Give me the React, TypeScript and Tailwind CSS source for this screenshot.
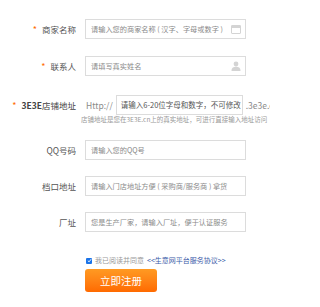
import React from "react";

const Star = () => <span className="mr-[5px] text-[9px] leading-none text-[#ff6a00]">*</span>;

const StoreIcon = () => (
  <svg width="10" height="9" viewBox="0 0 10 9" className="shrink-0">
    <rect x="0.5" y="0.5" width="9" height="8" rx="0.5" fill="none" stroke="#d4d4d4" />
    <rect x="0.5" y="0.5" width="9" height="2.5" fill="#d4d4d4" />
  </svg>
);

const UserIcon = () => (
  <svg width="10" height="10" viewBox="0 0 10 10" className="shrink-0">
    <circle cx="5" cy="3" r="2.4" fill="#d4d4d4" />
    <path d="M0.5 10 C0.5 6.6 2.5 5.8 5 5.8 C7.5 5.8 9.5 6.6 9.5 10 Z" fill="#d4d4d4" />
  </svg>
);

type Row = {
  label: string;
  placeholder: string;
  required?: boolean;
  icon?: React.ReactNode;
  mt: string;
};

const rows: Row[] = [
  { label: "商家名称", placeholder: "请输入您的商家名称 ( 汉字、字母或数字 )", required: true, icon: <StoreIcon />, mt: "mt-0" },
  { label: "联系人", placeholder: "请填写真实姓名", required: true, icon: <UserIcon />, mt: "mt-[17px]" },
];

const rows2: Row[] = [
  { label: "QQ号码", placeholder: "请输入您的QQ号", mt: "mt-[16px]" },
  { label: "档口地址", placeholder: "请输入门店地址方便 ( 采购商/服务商 ) 拿货", mt: "mt-[16px]" },
  { label: "厂址", placeholder: "您是生产厂家，请输入厂址，便于认证服务", mt: "mt-[16px]" },
];

const FieldRow = ({ row }: { row: Row }) => (
  <div className={`flex h-[20px] items-center ${row.mt}`}>
    <div className="flex w-[76px] items-center justify-end text-[8.5px] text-[#555]">
      {row.required && <Star />}
      <span>{row.label}</span>
    </div>
    <div className="ml-[9px] flex h-[20px] w-[161px] items-center border border-[#dcdcdc] bg-white pl-[5px] pr-[4px]">
      <span className="flex-1 overflow-hidden whitespace-nowrap text-[7.2px] text-[#8a8a8a]">{row.placeholder}</span>
      {row.icon}
    </div>
  </div>
);

export default function App() {
  return (
    <div className="h-[307px] w-[270px] overflow-hidden bg-white pt-[19px] font-['Noto_Sans_CJK_SC',sans-serif]">
      {rows.map((r) => (
        <FieldRow key={r.label} row={r} />
      ))}

      {/* shop url */}
      <div className="mt-[19px] flex h-[20px] w-[270px] items-center overflow-hidden whitespace-nowrap">
        <div className="flex w-[76px] shrink-0 items-center justify-end text-[8.5px] text-[#444]">
          <Star />
          <span className="font-semibold">3E3E</span>
          <span>店铺地址</span>
        </div>
        <span className="ml-[10px] text-[8.5px] text-[#8a8a8a]">Http://</span>
        <div className="ml-[3px] flex h-[20px] w-[127px] shrink-0 items-center overflow-hidden border border-[#dcdcdc] pl-[4px]">
          <span className="text-[7.5px] text-[#555]">请输入6-20位字母和数字，不可修改</span>
        </div>
        <span className="ml-[3px] text-[8.5px] text-[#8a8a8a]">.3e3e.cn/</span>
      </div>
      <div className="ml-[81px] overflow-hidden whitespace-nowrap text-[6.5px] leading-[9px] text-[#999]">
        店铺地址是您在3E3E.cn上的真实地址，可进行直接输入地址访问
      </div>

      {rows2.map((r) => (
        <FieldRow key={r.label} row={r} />
      ))}

      {/* agreement */}
      <div className="ml-[86px] mt-[25px] flex h-[7px] items-center whitespace-nowrap text-[7px] leading-none">
        <span className="flex h-[6px] w-[6px] items-center justify-center rounded-[1px] bg-[#1a73e8]">
          <svg width="5" height="5" viewBox="0 0 6 6">
            <path d="M1 3.2 L2.5 4.6 L5 1.4" fill="none" stroke="#fff" strokeWidth="1.1" />
          </svg>
        </span>
        <span className="ml-[3px] text-[#999]">我已阅读并同意</span>
        <span className="ml-[3px] text-[#3b5ba8]">&lt;&lt;生意网平台服务协议&gt;&gt;</span>
      </div>

      <button className="ml-[85px] mt-[5px] flex h-[23px] w-[72px] items-center justify-center rounded-[3px] bg-gradient-to-b from-[#ff9a22] to-[#ff6a00] text-[10.5px] text-white">
        立即注册
      </button>
    </div>
  );
}
